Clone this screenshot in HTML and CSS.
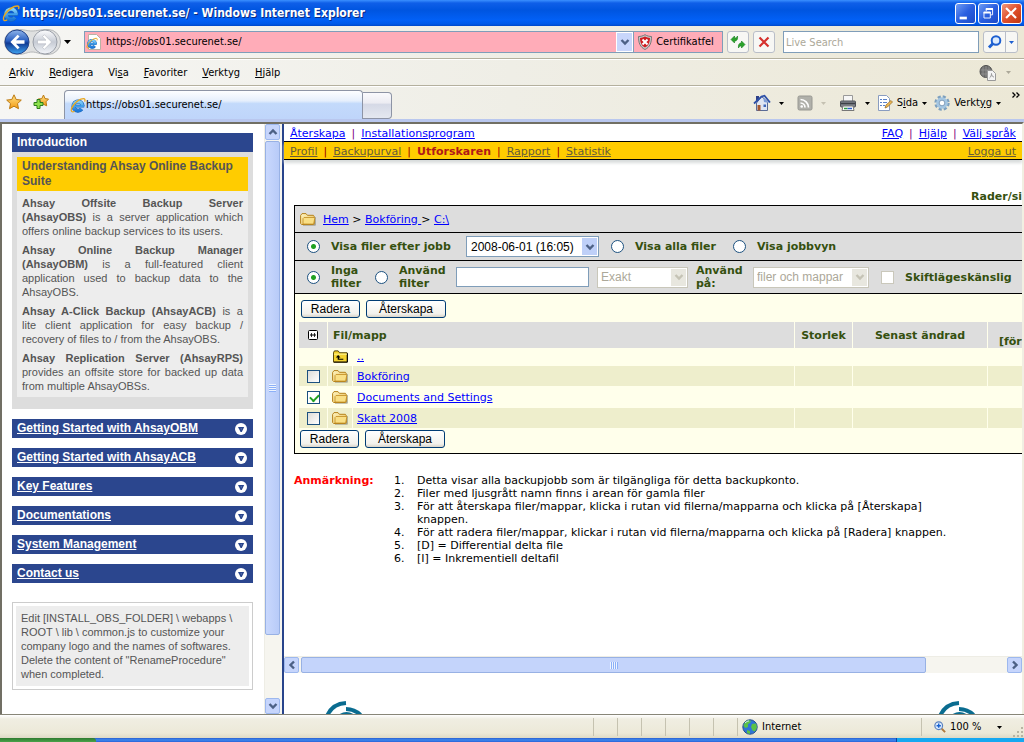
FILE: index.html
```html
<!DOCTYPE html>
<html lang="sv">
<head>
<meta charset="utf-8">
<title>https://obs01.securenet.se/</title>
<link rel="stylesheet" href="styles.css">
</head>
<body>
<svg class="defs" aria-hidden="true">
  <defs>
    <linearGradient id="gFolder" x1="0" y1="0" x2="1" y2="1"><stop offset="0" stop-color="#fff6c4"/><stop offset="1" stop-color="#e6b84c"/></linearGradient>
    <linearGradient id="gBlue" x1="0" y1="0" x2="0" y2="1"><stop offset="0" stop-color="#8fb4ea"/><stop offset=".45" stop-color="#2a5fc0"/><stop offset=".55" stop-color="#103a94"/><stop offset="1" stop-color="#3fa4f0"/></linearGradient>
    <linearGradient id="gPale" x1="0" y1="0" x2="0" y2="1"><stop offset="0" stop-color="#fdfdfe"/><stop offset=".5" stop-color="#c6cbd4"/><stop offset="1" stop-color="#f4f6fa"/></linearGradient>
    <linearGradient id="gStar" x1="0" y1="0" x2="0" y2="1"><stop offset="0" stop-color="#ffe48a"/><stop offset="1" stop-color="#f39a12"/></linearGradient>
    <linearGradient id="gIe" x1="0" y1="0" x2="0" y2="1"><stop offset="0" stop-color="#7fd0fb"/><stop offset="1" stop-color="#1c78d8"/></linearGradient>
  </defs>
  <symbol id="ie" viewBox="0 0 16 16">
    <path d="M12.600 9.200A4.600 4.600 0 1 0 11.600 12" fill="none" stroke="#1b62b4" stroke-width="4"/>
    <path d="M4 9.100h10.200" stroke="#1b62b4" stroke-width="2.800"/>
    <path d="M12.600 9.200A4.600 4.600 0 1 0 11.600 12" fill="none" stroke="url(#gIe)" stroke-width="3"/>
    <path d="M4.500 9.100h9.400" stroke="#3d9fec" stroke-width="1.800"/>
    <path d="M14.600 4.600c.8-1.600.4-3-1.200-2.900C10.600 1.900 6.400 4.600 3.600 8c-2.100 2.700-3 5.600-1.800 6.500.7.500 1.700.3 2.800-.3" fill="none" stroke="#e9a820" stroke-width="1.300"/>
  </symbol>
  <symbol id="folder" viewBox="0 0 16 14">
    <path d="M3 13h12V5" fill="none" stroke="#8d8a78" stroke-width="1.200"/>
    <path d="M.6 11.500V3.500L2 1.600h4l1.400 1.700h6l.8 1v7.400l-.8.8H1.600z" fill="url(#gFolder)" stroke="#b5821c"/>
    <path d="M3 12V6.500l1-1h10.400l.4.600-1.200 6z" fill="#f9df85" stroke="#c08c22" stroke-width=".8"/>
  </symbol>
  <symbol id="upfolder" viewBox="0 0 16 13">
    <path d="M.5 12.500V2.500l1-2h4l1.500 2h8v10z" fill="#f3d22e" stroke="#4b3b00"/>
    <path d="M1 4h14" stroke="#fff6a0"/><path d="M15.500 3v9.500H1" fill="none" stroke="#000"/>
    <path d="M5.500 5 3 7.500h2V10h6V9H6.500V7.500H8z" fill="#000"/>
  </symbol>
  <symbol id="chev" viewBox="0 0 10 10"><path d="M1.500 3 5 6.500 8.500 3" fill="none" stroke="currentColor" stroke-width="2.400"/></symbol>
  <symbol id="tri" viewBox="0 0 7 4"><path d="M0 0h7L3.500 4z" fill="currentColor"/></symbol>
  <symbol id="drop" viewBox="0 0 12 12"><circle cx="6" cy="6" r="6" fill="#fff"/><path d="M3 4h6.200L6.800 9H5.600z" fill="#28448c"/><path d="M5.500 5.200h1.400L6.200 7z" fill="#7187be"/></symbol>
  <symbol id="logo" viewBox="0 0 40 14">
    <path d="M2.500 15C6 7.500 12 3.500 21 3" fill="none" stroke="#0a6c90" stroke-width="4"/>
    <path d="M21 9c6.500 0 10.500 2 14.500 6" fill="none" stroke="#0a6c90" stroke-width="4"/>
    <path d="M14 14.500c5-3.500 10-3.500 15 0z" fill="#0a6c90"/>
  </symbol>
</svg>

<header class="titlebar">
  <svg class="i18"><use href="#ie"/></svg>
  <h1>https://obs01.securenet.se/ - Windows Internet Explorer</h1>
  <div class="winbtns">
    <button aria-label="Minimera"><svg viewBox="0 0 21 21"><path d="M4 14h8v3H4z" fill="#fff"/></svg></button>
    <button aria-label="Återställ"><svg viewBox="0 0 21 21"><path d="M8 8V5.500h7V12h-2.500M5.500 9h7v6.500h-7z" fill="none" stroke="#fff"/><path d="M5 9.500h8M7.500 5.500h8" stroke="#fff" stroke-width="2"/></svg></button>
    <button class="close" aria-label="Stäng"><svg viewBox="0 0 21 21"><path d="m4.500 4.500 11 11m0-11-11 11" stroke="#fff" stroke-width="2.400"/></svg></button>
  </div>
</header>

<div class="navbar">
  <div class="travel">
    <svg viewBox="0 0 58 28">
      <path d="M14 1.500C22 1.500 24 3 29 3s8-1.500 16-1.500a12.500 12.500 0 0 1 0 25C37 26.500 34 24 29 24s-7 2.500-15 2.500a12.500 12.500 0 0 1 0-25z" fill="#dfe0e0" stroke="#b5b7b9"/>
      <circle cx="14" cy="14" r="12" fill="url(#gBlue)" stroke="#24458c"/>
      <path d="M21.500 12.200H13l3.600-3.600-2-1.900L7.400 14l7.200 7.300 2-1.900-3.600-3.600h8.500z" fill="#fff"/>
      <circle cx="42" cy="14" r="12" fill="url(#gPale)" stroke="#9a9fa8"/>
      <path d="M34.500 12.200H43l-3.600-3.600 2-1.900 7.200 7.300-7.200 7.300-2-1.900 3.600-3.600h-8.500z" fill="#fff" stroke="#b3b7c0" stroke-width=".6"/>
    </svg>
    <svg class="tri"><use href="#tri"/></svg>
  </div>
  <div class="address">
    <svg class="i16" viewBox="0 0 16 16"><path d="M2.500.5h8l4 4v11h-12z" fill="#fff" stroke="#b9b2a5"/><use href="#ie" x="0" y="3" width="12" height="12"/></svg>
    <input type="text" value="https://obs01.securenet.se/" aria-label="Adress">
    <button class="combo" aria-label="Visa adresser"><svg class="i10"><use href="#chev"/></svg></button>
    <button class="cert"><svg viewBox="0 0 16 16" class="i16"><path d="M8 .7C10 2 12.500 2.500 14.500 2.500 14.500 9 13 13 8 15.500 3 13 1.500 9 1.500 2.500 3.500 2.500 6 2 8 .7z" fill="#c9c9c9" stroke="#777"/><path d="M8 2.500c1.600.9 3.300 1.300 5 1.400-.2 4.700-1.400 7.600-5 9.700-3.600-2.100-4.800-5-5-9.700 1.700-.1 3.400-.5 5-1.400z" fill="#cf1d22"/><path d="m5.500 5.500 5 5m0-5-5 5" stroke="#fff" stroke-width="2"/></svg>Certifikatfel</button>
  </div>
  <button class="tool" aria-label="Uppdatera"><svg viewBox="0 0 16 16" class="i16"><path d="M1 5.500 4.500 2v2.200C6 4 7 3.200 7.500 2 8 5 7 7 4.500 7.300V9z" fill="#2aa32a" stroke="#0f7a17" stroke-width=".6"/><path d="M15 10.500 11.500 14v-2.200C10 12 9 12.800 8.500 14 8 11 9 9 11.500 8.700V7z" fill="#2aa32a" stroke="#0f7a17" stroke-width=".6"/></svg></button>
  <button class="tool" aria-label="Stoppa"><svg viewBox="0 0 16 16" class="i16"><path d="m3.500 3.500 9 9m0-9-9 9" stroke="#d5302c" stroke-width="2.200"/></svg></button>
  <input class="search" type="text" placeholder="Live Search" aria-label="Live Search">
  <div class="split">
    <button aria-label="Sök"><svg viewBox="0 0 16 16" class="i16"><circle cx="9" cy="6.500" r="4.300" fill="#dcebfd" stroke="#1d5fd0" stroke-width="2"/><path d="m6 9.500-4 4" stroke="#1d5fd0" stroke-width="3"/></svg></button>
    <button aria-label="Sökalternativ"><svg class="tri"><use href="#tri"/></svg></button>
  </div>
</div>

<nav class="menubar">
  <button><u>A</u>rkiv</button><button><u>R</u>edigera</button><button>Vi<u>s</u>a</button><button><u>F</u>avoriter</button><button><u>V</u>erktyg</button><button><u>H</u>jälp</button>
  <div class="pdf">
    <svg viewBox="0 0 18 16"><circle cx="7" cy="6.500" r="6" fill="#6d6d6d" stroke="#4d4d4d"/><path d="M1.500 5h11M2 9h10M7 1v12M4 1.500v10M10 1.500v10" stroke="#999" stroke-width=".7"/><path d="M8.500 5.500h5l3 3v7h-8z" fill="#f4f4f4" stroke="#999"/><path d="M10.500 13c1.500-1 2-3 2-4.500 0 2 1 3.500 2.500 3.500" fill="none" stroke="#999"/></svg>
    <svg class="tri"><use href="#tri"/></svg>
  </div>
</nav>

<div class="tabbar">
  <button class="fav" aria-label="Favoriter"><svg viewBox="0 0 16 16" class="i16"><path d="m8 .8 2.200 4.700 5.100.6-3.800 3.500 1 5.100L8 12.200l-4.500 2.500 1-5.100L.7 6.100l5.100-.6z" fill="url(#gStar)" stroke="#bd7a12"/></svg></button>
  <button class="fav" aria-label="Lägg till"><svg viewBox="0 0 16 16" class="i16"><path d="m10.500 1 1.500 3.600 3.500.5-2.500 2.700.7 4-3.200-1.500-3.500 1.500.7-4L5 5.100l3.800-.5z" fill="url(#gStar)" stroke="#bd7a12"/><path d="M4 5.500h3v3h3v3H7v3H4v-3H1v-3h3z" fill="#8de04c" stroke="#2c7d1c"/></svg></button>
  <div class="tab"><svg class="i16"><use href="#ie"/></svg>https://obs01.securenet.se/</div>
  <button class="newtab" aria-label="Ny flik"></button>
  <div class="commands">
    <button aria-label="Startsida"><svg viewBox="0 0 18 18" class="i18"><path d="M3 2h3v6H3z" fill="#2e3f86"/><path d="M3.500 9v7.500h11V8L8.500 2.500z" fill="#dfe5f3" stroke="#5a6b96"/><path d="M1 9.500 8.500 2.500l3-.8L17 8.500" fill="none" stroke="#2c4fa8" stroke-width="1.800"/><path d="M10 2.500 16 9l-5-1z" fill="#7d9bd6"/><path d="M4.500 11h3v5.500h-3z" fill="#a5572f"/><path d="M10.500 10.500h2.500V13h-2.500z" fill="#3e66b8"/></svg><svg class="tri"><use href="#tri"/></svg></button>
    <button class="off" aria-label="Feed"><svg viewBox="0 0 16 16" class="i16"><rect x="1" y="1" width="14" height="14" rx="1.500" fill="#b0b0aa" stroke="#989892"/><path d="M3.500 8a4.500 4.500 0 0 1 4.500 4.500M3.500 4.500a8 8 0 0 1 8 8" fill="none" stroke="#fff" stroke-width="1.700"/><circle cx="4.700" cy="11.500" r="1.300" fill="#fff"/></svg><svg class="tri"><use href="#tri"/></svg></button>
    <button aria-label="Skriv ut"><svg viewBox="0 0 18 18" class="i18"><path d="M4.500 1.500h9V8h-9z" fill="#f6f6f6" stroke="#999"/><rect x="1.500" y="7" width="15" height="6" rx="1" fill="#80848c" stroke="#4d5056"/><path d="M2 9.500h14" stroke="#3d4046" stroke-width="1.500"/><path d="M4 12h10l1 4.500H3z" fill="#fff" stroke="#777"/><path d="M5 14.500h3.500" stroke="#2c9c3c" stroke-width="1.500"/><path d="M8.500 14.500H13" stroke="#2c60c8" stroke-width="1.500"/></svg><svg class="tri"><use href="#tri"/></svg></button>
    <button class="text"><svg viewBox="0 0 16 16" class="i16"><path d="M1.500.5h8l3 3v12h-11z" fill="#fff" stroke="#899cc0"/><path d="M3 4.500h2m1 0h4M3 7.500h2m1 0h4M3 10.500h2m1 0h2" stroke="#5a82c9"/><path d="m8 13 1-3 5-4.500 1.500 1.500-5 5z" fill="#eeb850" stroke="#8c6427" stroke-width=".7"/></svg><span>S<u>i</u>da</span><svg class="tri"><use href="#tri"/></svg></button>
    <button class="text"><svg viewBox="0 0 16 16" class="i16"><circle cx="8" cy="8" r="6.500" fill="none" stroke="#7c9fbe" stroke-width="2.400" stroke-dasharray="3.100 2"/><circle cx="8" cy="8" r="4.300" fill="#dfeaf4" stroke="#a4c6e2" stroke-width="3"/><circle cx="8" cy="8" r="2.800" fill="#fff" stroke="#577ca2" stroke-width=".7"/></svg><span>Verkt<u>y</u>g</span><svg class="tri"><use href="#tri"/></svg></button>
    <svg class="more" viewBox="0 0 8 6"><path d="m.5.500 2.500 2.500-2.500 2.500m4-5L7 3 4.500 5.500" fill="none" stroke="#000" stroke-width="1.300"/></svg>
  </div>
</div>

<div class="viewport">
  <aside class="side">
    <div class="sidebody">
      <section class="intro">
        <h2 class="bar">Introduction</h2>
        <div class="frame">
          <h3>Understanding Ahsay Online Backup Suite</h3>
          <div class="copy">
            <p><b class="full">Ahsay Offsite Backup Server</b> <span class="full"><b>(AhsayOBS)</b> is a server application which</span> offers online backup services to its users.</p>
            <p><b class="full">Ahsay Online Backup Manager</b> <span class="full"><b>(AhsayOBM)</b> is a full-featured client</span> <span class="full">application used to backup data to the</span> AhsayOBS.</p>
            <p><span class="full"><b>Ahsay A-Click Backup (AhsayACB)</b> is a</span> <span class="full">lite client application for easy backup /</span> recovery of files to / from the AhsayOBS.</p>
            <p><b class="full">Ahsay Replication Server (AhsayRPS)</b> <span class="full">provides an offsite store for backed up data</span> from multiple AhsayOBSs.</p>
          </div>
        </div>
      </section>
      <div class="bar"><a href="#">Getting Started with AhsayOBM</a><svg class="i12"><use href="#drop"/></svg></div>
      <div class="bar"><a href="#">Getting Started with AhsayACB</a><svg class="i12"><use href="#drop"/></svg></div>
      <div class="bar"><a href="#">Key Features</a><svg class="i12"><use href="#drop"/></svg></div>
      <div class="bar"><a href="#">Documentations</a><svg class="i12"><use href="#drop"/></svg></div>
      <div class="bar"><a href="#">System Management</a><svg class="i12"><use href="#drop"/></svg></div>
      <div class="bar"><a href="#">Contact us</a><svg class="i12"><use href="#drop"/></svg></div>
      <div class="edit"><p>Edit [INSTALL_OBS_FOLDER] \ webapps \ ROOT \ lib \ common.js to customize your company logo and the names of softwares. Delete the content of "RenameProcedure" when completed.</p></div>
    </div>
    <div class="vscroll">
      <button class="sb" aria-label="Upp"><svg class="i10 up"><use href="#chev"/></svg></button>
      <div class="thumb"><i></i></div>
      <div class="gap"></div>
      <button class="sb" aria-label="Ned"><svg class="i10"><use href="#chev"/></svg></button>
    </div>
  </aside>

  <main class="main">
    <div class="toplinks">
      <nav><a href="#">Återskapa</a><i>|</i><a href="#">Installationsprogram</a></nav>
      <nav><a href="#">FAQ</a><i>|</i><a href="#">Hjälp</a><i>|</i><a href="#">Välj språk</a></nav>
    </div>
    <div class="yellow">
      <nav><a href="#">Profil</a><i>|</i><a href="#">Backupurval</a><i>|</i><b>Utforskaren</b><i>|</i><a href="#">Rapport</a><i>|</i><a href="#">Statistik</a></nav>
      <nav><a href="#">Logga ut</a></nav>
    </div>
    <div class="pane">
      <div class="rows"><b>Rader/si</b></div>
      <form class="panel">
        <div class="prow crumbs"><svg class="fold"><use href="#folder"/></svg><span><a href="#">Hem</a> &gt; <a href="#">Bokföring&nbsp;</a>&gt; <a href="#">C:\</a></span></div>
        <div class="prow jobs">
          <input type="radio" name="view" id="v1" checked><label for="v1" class="j1">Visa filer efter jobb</label>
          <div class="select job"><select aria-label="Jobb"><option>2008-06-01 (16:05)</option></select><span><svg class="i10"><use href="#chev"/></svg></span></div>
          <input type="radio" name="view" id="v2"><label for="v2" class="j2">Visa alla filer</label>
          <input type="radio" name="view" id="v3"><label for="v3">Visa jobbvyn</label>
        </div>
        <div class="prow filter">
          <input type="radio" name="filter" id="f1" checked><label for="f1" class="l1">Inga<br>filter</label>
          <input type="radio" name="filter" id="f2"><label for="f2" class="l2">Använd<br>filter</label>
          <input type="text" class="pattern" aria-label="Filter">
          <div class="select exact dis"><select disabled aria-label="Matchning"><option>Exakt</option></select><span><svg class="i10"><use href="#chev"/></svg></span></div>
          <label for="on" class="l3">Använd<br>på:</label>
          <div class="select on dis"><select disabled id="on"><option>filer och mappar</option></select><span><svg class="i10"><use href="#chev"/></svg></span></div>
          <input type="checkbox" id="cs" disabled><label for="cs">Skiftlägeskänslig</label>
        </div>
        <div class="files">
          <div class="btns top"><button type="button">Radera</button><button type="button">Återskapa</button></div>
          <table>
            <colgroup><col class="c1"><col class="c2"><col><col class="c4"><col class="c5"><col class="c6"></colgroup>
            <thead><tr>
              <th><svg class="i10 toggle" viewBox="0 0 10 10"><rect x=".5" y=".5" width="9" height="9" rx="1" fill="#fff" stroke="#000"/><path d="M2 5h6" stroke="#000"/><path d="M3.500 3v4M6.500 3v4" stroke="#000" stroke-width=".8"/></svg></th>
              <th colspan="2" class="left">Fil/mapp</th><th>Storlek</th><th>Senast ändrad</th><th class="ratio">[för</th>
            </tr></thead>
            <tbody>
              <tr class="parent"><td></td><td><svg class="upf"><use href="#upfolder"/></svg></td><td class="name"><a href="#">..</a></td><td></td><td></td><td></td></tr>
              <tr class="alt"><td><input type="checkbox" aria-label="Bokföring"></td><td><svg class="fold"><use href="#folder"/></svg></td><td class="name"><a href="#">Bokföring</a></td><td></td><td></td><td></td></tr>
              <tr><td><input type="checkbox" aria-label="Documents and Settings" checked></td><td><svg class="fold"><use href="#folder"/></svg></td><td class="name"><a href="#">Documents and Settings</a></td><td></td><td></td><td></td></tr>
              <tr class="alt"><td><input type="checkbox" aria-label="Skatt 2008"></td><td><svg class="fold"><use href="#folder"/></svg></td><td class="name"><a href="#">Skatt 2008</a></td><td></td><td></td><td></td></tr>
            </tbody>
          </table>
          <div class="btns"><button type="button">Radera</button><button type="button">Återskapa</button></div>
        </div>
      </form>
      <div class="notes">
        <b>Anmärkning:</b>
        <ol>
          <li><span>Detta visar alla backupjobb som är tilgängliga för detta backupkonto.</span></li>
          <li><span>Filer med ljusgrått namn finns i arean för gamla filer</span></li>
          <li><span>För att återskapa filer/mappar, klicka i rutan vid filerna/mapparna och klicka på [Återskapa] knappen.</span></li>
          <li><span>För att radera filer/mappar, klickar i rutan vid filerna/mapparna och klicka på [Radera] knappen.</span></li>
          <li><span>[D] = Differential delta file</span></li>
          <li><span>[I] = Inkrementiell deltafil</span></li>
        </ol>
      </div>
    </div>
    <div class="hscroll">
      <button class="sb" aria-label="Vänster"><svg class="i10 west"><use href="#chev"/></svg></button>
      <div class="thumb"><i></i></div>
      <div class="gap"></div>
      <button class="sb" aria-label="Höger"><svg class="i10 east"><use href="#chev"/></svg></button>
    </div>
    <footer class="logos"><svg><use href="#logo"/></svg><svg><use href="#logo"/></svg></footer>
  </main>
</div>

<div class="status">
  <div class="cell grow"></div><div class="cell"></div><div class="cell"></div><div class="cell"></div><div class="cell"></div><div class="cell"></div><div class="cell"></div>
  <div class="cell zone"><svg viewBox="0 0 16 16" class="i16"><circle cx="8" cy="8" r="7.200" fill="#2f74d6" stroke="#28518d"/><path d="M3 3c2-2 5-2 6-1L8 4 6 5v3L3.500 9 1.500 7zM10 5l4-.5 1 4-2 4-2.500-1L9 8zM5 11l3 1v3l-3-1z" fill="#5ac245"/><path d="M3 4c1.500-1.500 3-2 4-2" stroke="#d6ecff" fill="none"/></svg>Internet</div>
  <div class="cell zoom"><svg viewBox="0 0 14 14" class="i12"><circle cx="5.500" cy="5.500" r="4.500" fill="#dcecff" stroke="#5c82bd" stroke-width="1.400"/><path d="M5.500 3v5M3 5.500h5" stroke="#1761cf" stroke-width="1.600"/><path d="m9 9 4 4" stroke="#b07a3d" stroke-width="2.200"/></svg>100 %<svg class="tri"><use href="#tri"/></svg></div>
  <svg class="grip" viewBox="0 0 12 12"><path d="M9 1h2v2H9zM5 5h2v2H5zM9 5h2v2H9zM1 9h2v2H1zM5 9h2v2H5zM9 9h2v2H9z" fill="#b8b4a2"/></svg>
</div>
<div class="taskbar"><div class="start"></div><div class="tray"></div></div>
</body>
</html>
```
FILE: styles.css
```css
* { box-sizing: border-box; }
html, body { height: 100%; }
body {
  margin: 0;
  display: flex;
  flex-direction: column;
  overflow: hidden;
  background: #ece9d8;
  color: #000;
  font: 11px/14px "DejaVu Sans Condensed", "DejaVu Sans", sans-serif;
}
button, input, select { font: inherit; color: inherit; margin: 0; }
button { padding: 0; border: 0; background: none; display: flex; align-items: center; justify-content: center; }
h1, h2, h3, p { margin: 0; }
svg { display: block; flex: none; }
.defs { position: absolute; width: 0; height: 0; }
.i10 { width: 10px; height: 10px; }
.i12 { width: 12px; height: 12px; }
.i16 { width: 16px; height: 16px; }
.i18 { width: 18px; height: 18px; }
.tri { width: 5px; height: 3px; }

/* title bar */
.titlebar {
  flex: none;
  height: 26px;
  display: flex;
  align-items: center;
  gap: 2px;
  padding: 0 2px;
  background: linear-gradient(#3b90ff 0, #0f5fe8 3px, #0055e0 10px, #0260f6 20px, #0059e8 24px, #0048c8 26px);
}
.titlebar h1 {
  flex: 1;
  color: #fff;
  font: bold 12px/18px "DejaVu Sans Condensed", sans-serif;
  text-shadow: 1px 1px 0 #0a2a80;
}
.winbtns { display: flex; gap: 2px; }
.winbtns button {
  width: 21px;
  height: 21px;
  border: 1px solid #fff;
  border-radius: 3px;
  background: linear-gradient(135deg, #6f9cf4, #2a5fe0 50%, #1c4bc8);
}
.winbtns svg { width: 19px; height: 19px; }
.winbtns .close { background: linear-gradient(135deg, #f0987c, #e0502c 50%, #c03810); }

/* address row */
.navbar, .menubar, .tabbar { flex: none; background: linear-gradient(90deg, #f6f6f4, #efeee6 50%, #ece8d6); }
.navbar { display: flex; align-items: center; height: 33px; padding: 0 6px 0 3px; border-bottom: 1px solid #b4b09e; }
.travel { display: flex; align-items: center; gap: 3px; width: 81px; }
.travel svg:first-child { width: 58px; height: 28px; }
.travel .tri { width: 7px; height: 4px; }
.address { flex: 1; display: flex; align-items: center; height: 22px; border: 1px solid #7f9db9; background: #ffacb8; padding-left: 1px; }
.address input { flex: 1; min-width: 0; border: 0; background: none; padding: 0 4px; outline: 0; }
.combo { width: 17px; height: 20px; color: #4d6185; background: #c8d6fb; border: 1px solid #fff; }
.cert { width: 89px; height: 20px; padding-right: 5px; gap: 3px; border-left: 1px solid #7f9db9; }
.tool { width: 22px; height: 22px; margin-left: 4px; border: 1px solid #b9bec8; border-radius: 3px; background: #f7f7f4; }
.search { width: 196px; height: 22px; margin-left: 8px; padding: 0 2px; border: 1px solid #7f9db9; background: #fff; }
.search::placeholder { color: #aca899; opacity: 1; }
.split { display: flex; width: 35px; height: 22px; margin-left: 4px; border: 1px solid #b9bec8; border-radius: 3px; background: #f7f7f4; color: #1d5fd0; }
.split button { flex: 1; }
.split button:last-child { flex: none; width: 12px; border-left: 1px solid #b9bec8; }

/* menu row */
.menubar { display: flex; align-items: center; gap: 15px; height: 27px; padding: 0 13px 0 9px; border-top: 1px solid #fff; border-bottom: 1px solid #b4b09e; }
.menubar button { display: block; }
.pdf { margin-left: auto; display: flex; align-items: center; gap: 9px; color: #aca899; }
.pdf svg:first-child { width: 18px; height: 16px; }

/* tab row */
.tabbar { display: flex; height: 36px; padding-left: 6px; border-top: 1px solid #fff; border-bottom: 3px solid #b9c7ee; }
.fav { width: 16px; height: 29px; margin-right: 11px; }
.fav + .fav { margin-right: 15px; }
.tab {
  width: 299px;
  margin-top: 3px;
  padding: 0 5px;
  display: flex;
  align-items: center;
  border: 1px solid #8d94a5;
  border-bottom: 0;
  border-radius: 4px 4px 0 0;
  background: linear-gradient(#fdfeff, #e6effc 35%, #c3dafb 45%, #bfd5fa);
}
.newtab { width: 29px; height: 27px; margin-top: 5px; border: 1px solid #8d94a5; border-left: 0; border-radius: 0 4px 4px 0; background: linear-gradient(#fafafd, #ececf2 40%, #d5d9e6 45%, #e4e8f0); }
.commands { margin-left: auto; display: flex; align-items: center; gap: 13px; padding: 0 4px 0 0; }
.commands button { gap: 8px; height: 29px; }
.commands .off { color: #c5c1b2; }
.commands .text { gap: 4px; margin-left: -6px; }
.more { width: 8px; height: 6px; align-self: flex-start; margin: 5px 0 0 -2px; }

/* content */
.viewport { flex: 1; min-height: 0; display: flex; border: 2px solid #716f64; border-width: 2px 2px 0 2px; border-right-color: #f1efe2; background: #fff; }
.side { flex: none; width: 282px; display: flex; border-right: 2px solid #28448c; }
.sidebody { flex: 1; padding: 9px 11px 0 10px; display: flex; flex-direction: column; gap: 10px; color: #555; font: 11px/14px "Liberation Sans", sans-serif; }
.bar { display: flex; align-items: center; justify-content: space-between; height: 19px; padding: 0 6px 0 5px; background: #2b468e; color: #fff; font: bold 12px/19px "Liberation Sans", sans-serif; }
.bar a { color: #fff; }
.frame { background: #ddd; padding: 5px 5px 12px; }
.frame h3 { padding: 2px 5px; background: #fc0; color: #555; font: bold 12px/15px "Liberation Sans", sans-serif; }
.copy { padding: 5px 5px 4px; background: #ededed; display: flex; flex-direction: column; gap: 5px; text-align: justify; }
.full { display: block; text-align: justify; text-align-last: justify; }
.edit { margin-top: 9px; padding: 3px; border: 1px solid #ccc; }
.edit p { background: #ededed; padding: 5px 5px; }

/* scroll bars */
.vscroll, .hscroll { display: flex; background: #f6f5ef; }
.vscroll { width: 18px; padding-right: 2px; flex-direction: column; border-left: 1px solid #eeede5; }
.hscroll { height: 17px; flex: none; border-top: 1px solid #eeede5; }
.sb { flex: none; width: 15px; height: 16px; border: 1px solid #9db8ee; border-radius: 2px; background: #c6d5fc; color: #4d6185; }
.up { transform: rotate(180deg); }
.west { transform: rotate(90deg); }
.east { transform: rotate(-90deg); }
.thumb { display: flex; align-items: center; justify-content: center; border: 1px solid #98b1e4; border-radius: 2px; background: #c4d4fb; }
.vscroll .thumb { flex: 493; width: 15px; margin-top: 1px; background: linear-gradient(90deg, #c9d8fd, #b8cbf8); }
.vscroll .gap { flex: 63; }
.vscroll .thumb i { width: 7px; height: 8px; background: repeating-linear-gradient(#eef4fe 0 1px, #8cb0f8 1px 2px); }
.hscroll .thumb { flex: 624; margin-left: 2px; }
.hscroll .gap { flex: 81; }
.hscroll .thumb i { width: 8px; height: 7px; background: repeating-linear-gradient(90deg, #eef4fe 0 1px, #8cb0f8 1px 2px); }

/* application frame */
.main { flex: 1; min-width: 0; display: flex; flex-direction: column; font: 11px/13px "DejaVu Sans", sans-serif; }
.main a { color: #00f; }
.toplinks, .yellow { flex: none; display: flex; justify-content: space-between; padding: 0 6px; white-space: nowrap; color: #800080; }
.toplinks nav, .yellow nav { display: flex; gap: 6px; }
.toplinks i, .yellow i { font-style: normal; }
.toplinks { height: 17px; align-items: center; padding-top: 1px; }
.yellow { height: 19px; align-items: center; padding-top: 1px; background: #fc0; border: 1px solid #000; border-width: 1px 0; color: #900; box-shadow: 0 3px 3px #d8dcdc; }
.yellow a { color: #665c3a; }
.yellow b { color: #b01818; }
.pane { flex: 1; min-height: 0; overflow: hidden; padding: 30px 0 0 10px; }
.rows { display: flex; height: 15px; justify-content: flex-end; white-space: nowrap; }
.rows b, .panel label, .panel th { color: #35500f; font-weight: bold; }
.panel { margin-right: -50px; border: 1px solid #000; background: #ffffeb; }
.prow { display: flex; align-items: center; background: #ddd; border-bottom: 1px solid #000; }
.crumbs { height: 27px; gap: 7px; padding-left: 5px; }
.fold { width: 16px; height: 14px; }
.upf { width: 15px; height: 13px; }
.jobs { height: 28px; padding-left: 12px; }
.filter { height: 33px; padding-left: 12px; }
.panel label { white-space: nowrap; line-height: 13px; }
.panel input[type=radio], .panel input[type=checkbox] { appearance: none; flex: none; width: 13px; height: 13px; border: 1px solid #1c5180; background: #fff; }
.panel input[type=radio] { border-radius: 50%; margin-right: 11px; }
.panel input[type=radio]:checked { background: radial-gradient(circle, #21a121 0 2px, #fff 3px); }
.panel td input[type=checkbox] { display: block; margin: 0 auto; background: linear-gradient(135deg, #dcdcd7, #fff); }
.panel td input[type=checkbox]:checked { background: #fff linear-gradient(#fff, #fff); }
.panel td input[type=checkbox]:checked::after { content: ""; display: block; width: 7px; height: 4px; margin: 2px; border: solid #21a121; border-width: 0 0 2px 2px; transform: rotate(-45deg); }
.panel input[type=checkbox]:disabled { border-color: #cac8bb; margin-right: 11px; }
.select { position: relative; flex: none; height: 21px; font: 12px/16px "Liberation Sans", sans-serif; }
.select select { appearance: none; width: 100%; height: 100%; padding: 0 4px; border: 1px solid #7f9db9; border-radius: 0; background: #fff; opacity: 1; }
.select span { position: absolute; top: 2px; right: 2px; bottom: 2px; width: 15px; display: flex; align-items: center; justify-content: center; background: #bfd0f8; color: #4d6185; pointer-events: none; }
.dis select { border: 1px solid #c9c7ba; color: #aca899; padding: 0 3px; }
.dis span { background: #e8e7df; color: #c5c3b5; }
.job { width: 133px; margin: 0 12px 0 7px; }
.jobs label + input { margin-left: 12px; }
.j1 { width: 128px; }
.j2 { width: 86px; }
.l1 { width: 33px; }
.filter .l1 + input { margin-left: 11px; }
.l2 { width: 57px; }
.pattern { width: 133px; height: 20px; border: 1px solid #7f9db9; background: #fff; }
.exact { width: 91px; margin: 0 8px; }
.l3 { width: 57px; }
.on { width: 116px; margin-right: 12px; }

.files { padding: 6px 0 5px 4px; }
.btns { display: flex; gap: 6px; padding-left: 1px; margin-top: 1px; }
.btns.top { padding-left: 2px; margin: 0 0 4px; }
.btns button { width: 59px; height: 18px; border: 1px solid #003c74; border-radius: 3px; background: linear-gradient(#fff, #f2f1ec 80%, #d8d3c8); font: 12px/16px "Liberation Sans", sans-serif; }
.btns button + button { width: 80px; }
.panel table { width: 100%; table-layout: fixed; border-collapse: separate; border-spacing: 1px 0; margin-left: -1px; }
.c1 { width: 28px; }
.c2 { width: 24px; }
.c4 { width: 57px; }
.c5 { width: 134px; }
.c6 { width: 81px; }
.panel th, .panel td { padding: 0; }
.panel th { height: 26px; background: #ddd; }
.panel td { height: 21px; border-bottom: 1px solid #ffffeb; }
.panel .left { text-align: left; padding-left: 5px; }
.panel .ratio { text-align: left; padding: 12px 0 0 11px; }
.panel .parent td { height: 18px; }
.panel td svg, .toggle { margin: 0 auto; }
.alt td { background: #eec; }
.panel .name { padding-left: 4px; }
.notes { display: flex; padding-top: 20px; }
.notes b { color: #f00; width: 83px; }
.notes ol { flex: 1; margin: 0; padding: 0 46px 0 17px; list-style: none; counter-reset: note; }
.notes li { display: flex; counter-increment: note; }
.notes li::before { content: counter(note) "."; flex: none; width: 23px; }
.logos { flex: none; height: 41px; display: flex; justify-content: space-between; align-items: flex-end; padding: 0 44px 0 41px; overflow: hidden; }
.logos svg { width: 40px; height: 14px; }

/* status bar */
.status { flex: none; display: flex; align-items: center; height: 24px; padding-top: 1px; border-top: 1px solid #888678; background: linear-gradient(#fff 0, #f0eee2 4px, #ece9d8 18px, #dedac6); }
.cell { flex: none; width: 24px; height: 18px; border-right: 1px solid #c5c2b0; display: flex; align-items: center; }
.cell.grow { flex: 1; }
.zone { width: 184px; gap: 4px; padding-left: 4px; }
.zoom { width: 90px; gap: 4px; padding-left: 12px; border: 0; }
.zoom .tri { margin-left: 12px; }
.grip { width: 12px; height: 12px; align-self: flex-end; }
.taskbar { flex: none; height: 4px; display: flex; justify-content: space-between; background: linear-gradient(#2a5fd0, #3d88ee 2px, #2a62d8); }
.start { width: 96px; background: linear-gradient(#2f7a30, #4aa34a); border-radius: 0 3px 0 0; }
.tray { width: 128px; background: #16a8f0; border-left: 1px solid #0d3f9c; }
```
